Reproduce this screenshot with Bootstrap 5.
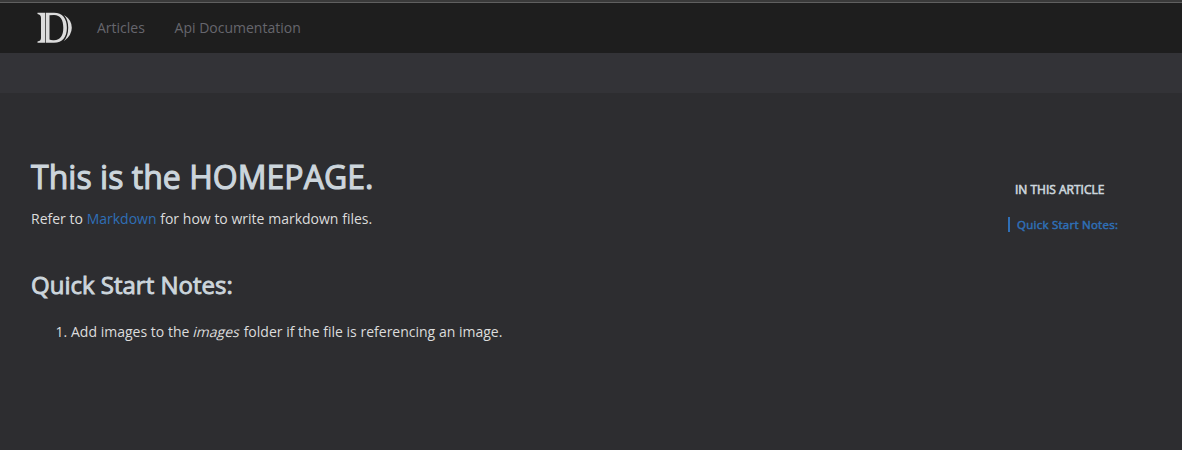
<!DOCTYPE html>
<html lang="en" data-bs-theme="dark">
<head>
<meta charset="utf-8">
<title>Homepage</title>
<link href="https://cdn.jsdelivr.net/npm/bootstrap@5.3.0/dist/css/bootstrap.min.css" rel="stylesheet">
<style>
body{font-family:"Open Sans",sans-serif;font-size:14px;line-height:20px;background:#2d2d30;color:#dcdcdc;border-top:2px solid #3a3a3a;min-height:450px;overflow:hidden}
.topbar{height:51px;background:#1e1e1e;border-top:1px solid #606060;padding:0 0 0 37px}
.topbar .nav-link{color:#66666d;padding:0;margin-right:29.700px}
.logo{margin-right:24px}
.subbar{height:40px;background:#333337}
.content{padding:64px 0 0 31px;height:357px}
.content h1,.content h2,.toc h5,.toc a{font-weight:400;-webkit-text-stroke:1.100px currentColor;margin:0}
.content h1{font-size:32px;line-height:40px;color:#ccd5dc;letter-spacing:.03px}
.content h2{font-size:24px;line-height:30px;margin-top:41px;color:#ccd5dc;-webkit-text-stroke-width:.9px}
.content a,.toc a{color:#2f6fb7;text-decoration:none}
.content p{word-spacing:.08px}
.content ol{margin:22px 0 0;padding-left:40px;word-spacing:.06px}
.content em{font-style:normal;display:inline-block;transform:skewX(-14deg);padding-left:.5px}
.toc{width:174px;padding-top:23px}
.content .toc h5{font-size:12px;line-height:20px;padding-left:7px;color:#ccd5dc;-webkit-text-stroke-width:.6px}
.content .toc a{font-size:11.500px;line-height:15px;letter-spacing:.25px;border-left:2px solid #2f6fb7;padding-left:7px;margin-top:17px;-webkit-text-stroke-width:.5px}
</style>
</head>
<body>
<nav class="topbar d-flex align-items-center">
  <a class="logo d-flex" href="#" aria-label="Home">
    <svg width="36" height="32" viewBox="0 0 36 32" fill="#dcdcdc">
      <path d="M.5.8H8V30.700H.5V29.500Q4 29 4 26V6Q4 2.500.5 2Z"/>
      <path fill-rule="evenodd" d="M8.700.8H17C25.500.8 29.900 6.500 29.900 15.700S25.500 30.700 17 30.700H8.700ZM12.500 3.200V27.500Q14 28.500 17 28.300C23.500 28 26.300 23.500 26.300 15.700S23.500 3.200 17 3Z"/>
      <path d="M27 3Q34.800 8 34.800 15.700T27 29Q31.200 23.500 31.200 15.700T27 3Z"/>
    </svg>
  </a>
  <a class="nav-link" href="#">Articles</a>
  <a class="nav-link" href="#">Api Documentation</a>
</nav>
<div class="subbar"></div>
<div class="content d-flex justify-content-between">
  <article>
    <h1>This is the HOMEPAGE.</h1>
    <p class="mt-2 pt-1 mb-0">Refer to <a href="#">Markdown</a> for how to write markdown files.</p>
    <h2>Quick Start Notes:</h2>
    <ol><li>Add images to the <em>images</em> folder if the file is referencing an image.</li></ol>
  </article>
  <aside class="toc">
    <h5>IN THIS ARTICLE</h5>
    <a class="d-block" href="#">Quick Start Notes:</a>
  </aside>
</div>
<script src="https://cdn.jsdelivr.net/npm/bootstrap@5.3.0/dist/js/bootstrap.bundle.min.js"></script>
</body>
</html>
